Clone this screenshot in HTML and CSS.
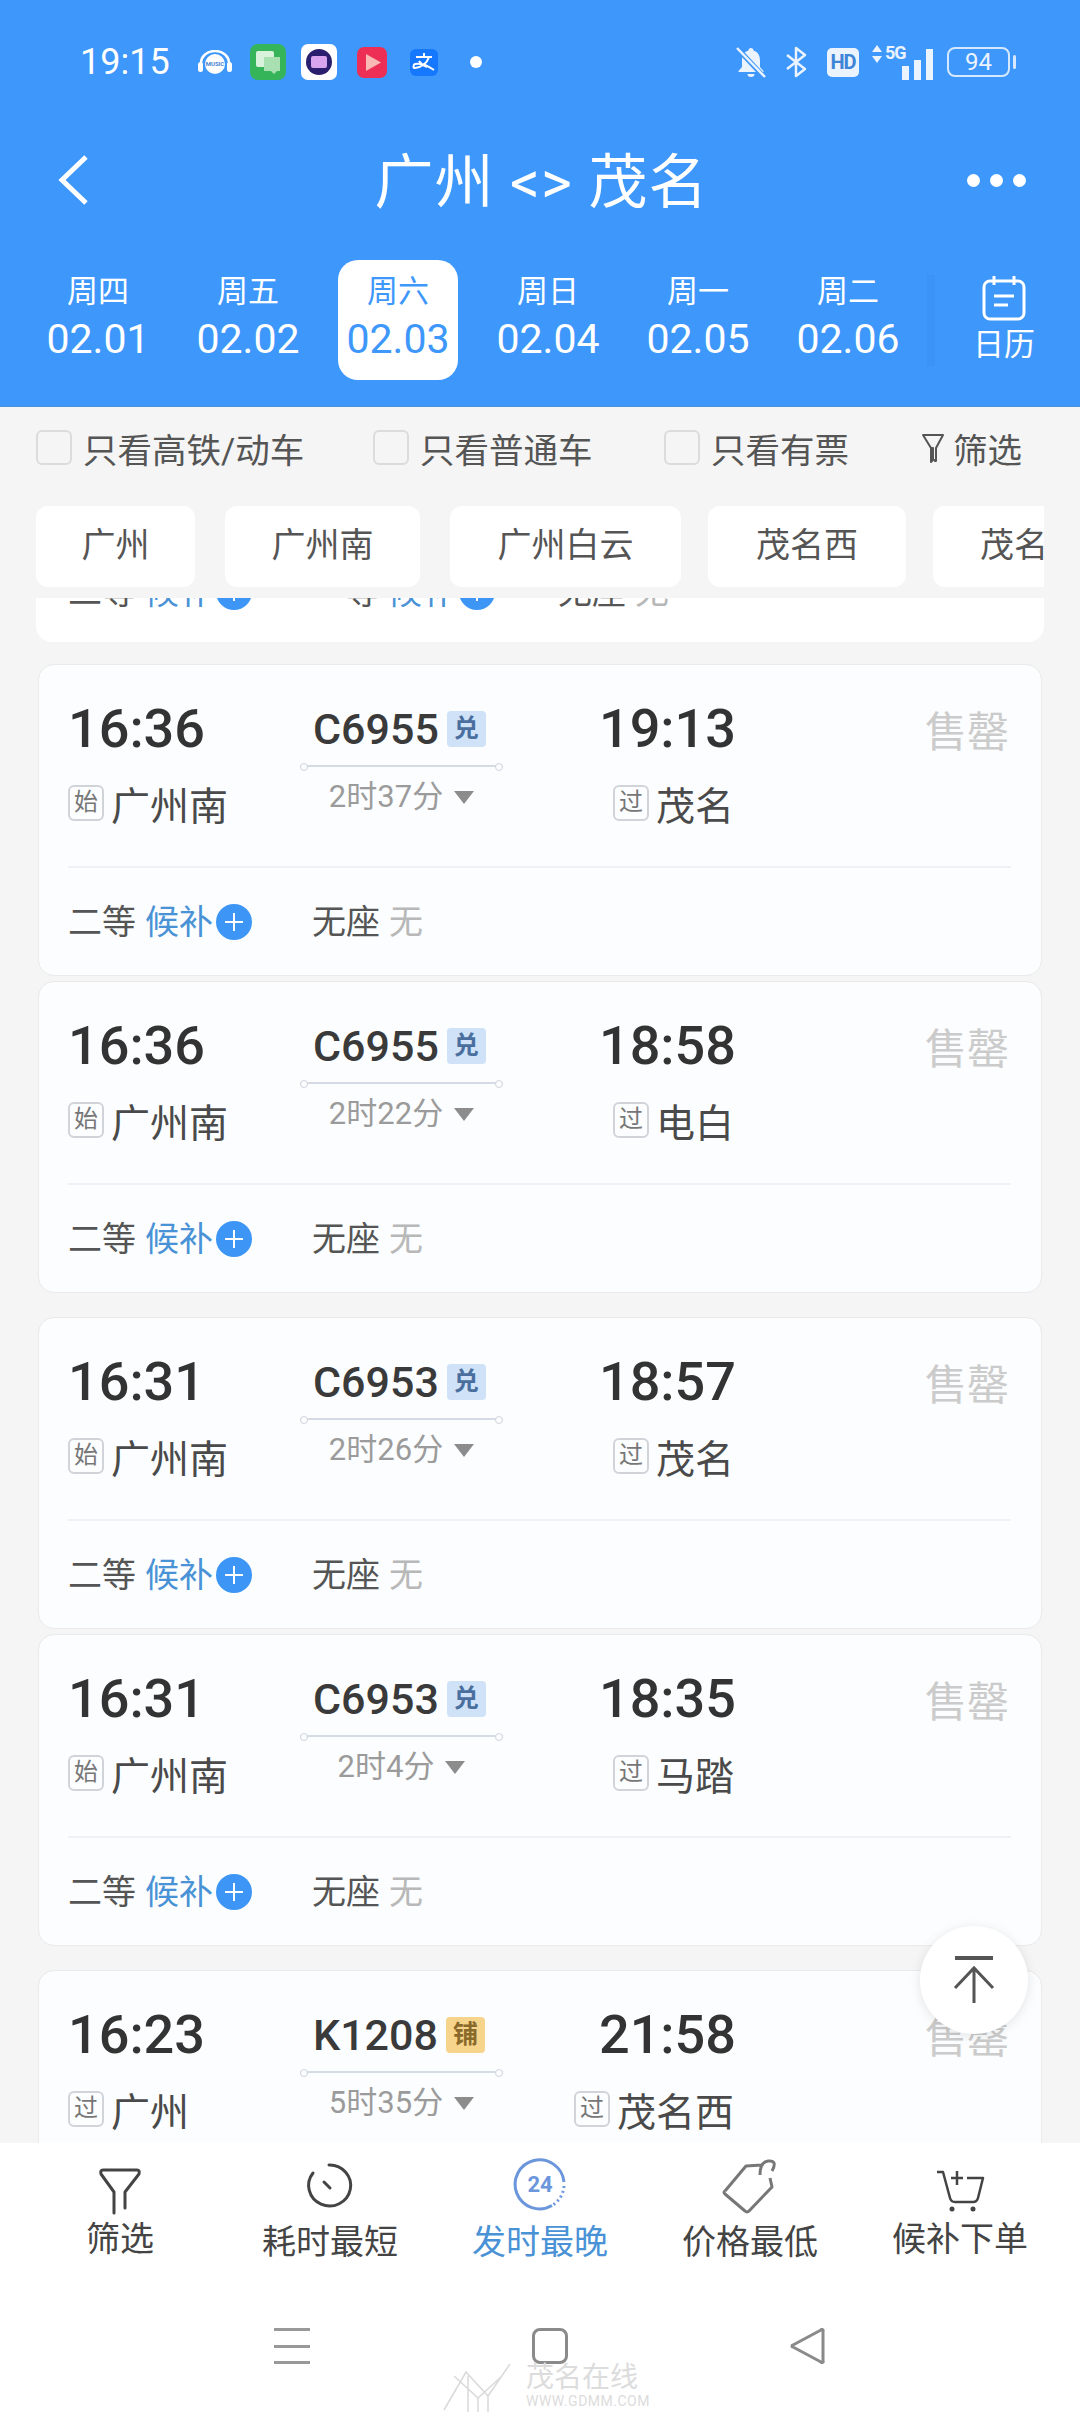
FILE: index.html
```html
<!DOCTYPE html>
<html lang="zh-CN">

<head>
    <meta charset="UTF-8">
    <title>广州 &lt;&gt; 茂名</title>
    <link rel="stylesheet" href="styles.css">
</head>

<body>
    <div class="page">
        <!-- top blue area -->
        <div class="header">
            <div class="status-bar">
                <span class="clock">19:15</span>
                <div class="notify-icons">
                    <svg class="ic-music" viewBox="0 0 34 24"><path d="M3 17V13a14 12 0 0 1 28 0v4" fill="none" stroke="#fff" stroke-width="2.5"/><circle cx="17" cy="14" r="10" fill="#fff"/><rect x="0" y="12" width="5" height="10" rx="2.5" fill="#fff"/><rect x="29" y="12" width="5" height="10" rx="2.5" fill="#fff"/><text x="17" y="16" text-anchor="middle" class="ic-music-text">MUSIC</text></svg>
                    <svg class="ic-app" viewBox="0 0 36 36"><rect width="36" height="36" rx="8" fill="#36b45a"/><rect x="6" y="7" width="18" height="16" rx="2" fill="#d9f2dc"/><path d="M14 13h16v14h-3l-3 3-3-3h-7z" fill="#a8e0b2"/></svg>
                    <svg class="ic-app" viewBox="0 0 36 36"><rect width="36" height="36" rx="7" fill="#fff"/><circle cx="18" cy="18" r="13" fill="#2a1f6e"/><rect x="10" y="12" width="16" height="12" rx="2" fill="#d8a4ee"/></svg>
                    <svg class="ic-red" viewBox="0 0 30 31"><rect width="30" height="31" rx="7" fill="#ee2f55"/><path d="M9 7l15 8.500-15 8.500z" fill="#f9b9b4"/></svg>
                    <svg class="ic-ali" viewBox="0 0 28 27"><rect width="28" height="27" rx="6" fill="#1677ff"/><path d="M6 8h16M14 4v4M19 8c-2 6-7 10-14 11-2 0-2-3 0-4 5-1 12 1 19 6M9 12c2 3 5 5 8 6" fill="none" stroke="#fff" stroke-width="2"/></svg>
                    <span class="status-dot"></span>
                </div>
                <div class="sys-icons">
                    <svg class="ic-bell" viewBox="0 0 32 34"><path d="M16 3c-1.500 0-2.500 1-2.500 2.500C8.500 7 7 11 7 16v6l-3.500 4v1h25v-1L25 22v-6c0-5-1.500-9-6.500-10.500C18.500 4 17.500 3 16 3zM12.500 29a3.500 3 0 0 0 7 0z" fill="#eaf3fe"/><path d="M3 4l26 28" stroke="#3e97fb" stroke-width="5"/><path d="M2 3l28 29" stroke="#eaf3fe" stroke-width="2.500"/></svg>
                    <svg class="ic-bt" viewBox="0 0 22 32"><path d="M2 9l18 14-9 7V2l9 7L2 23" fill="none" stroke="#eaf3fe" stroke-width="2.500" stroke-linejoin="round"/></svg>
                    <span class="hd">HD</span>
                    <div class="signal">
                        <svg class="ic-updown" viewBox="0 0 12 20"><path d="M6 1l5 7H1zM6 19l5-7H1z" fill="#eaf3fe"/></svg>
                        <span class="five-g">5G</span>
                        <div class="bars"><i class="bar-1"></i><i class="bar-2"></i><i class="bar-3"></i></div>
                    </div>
                    <div class="battery"><span>94</span></div>
                </div>
            </div>

            <div class="title-bar">
                <svg class="ic-back" viewBox="0 0 32 50"><path d="M29 2L5 25l24 23" fill="none" stroke="#fff" stroke-width="5"/></svg>
                <div class="title">广州 &lt;&gt; 茂名</div>
                <div class="more"><i></i><i></i><i></i></div>
            </div>

            <div class="date-bar">
                <div class="date-item"><span class="week">周四</span><span class="day">02.01</span></div>
                <div class="date-item"><span class="week">周五</span><span class="day">02.02</span></div>
                <div class="date-item date-item-current"><span class="week">周六</span><span class="day">02.03</span></div>
                <div class="date-item"><span class="week">周日</span><span class="day">02.04</span></div>
                <div class="date-item"><span class="week">周一</span><span class="day">02.05</span></div>
                <div class="date-item"><span class="week">周二</span><span class="day">02.06</span></div>
                <div class="calendar">
                    <svg class="ic-cal" viewBox="0 0 44 46"><rect x="2" y="6" width="40" height="38" rx="6" fill="none" stroke="#fff" stroke-width="3"/><path d="M12 1v9M32 1v9M12 21h20M12 30h14" fill="none" stroke="#fff" stroke-width="3"/></svg>
                    <span>日历</span>
                </div>
            </div>
        </div>

        <!-- filters -->
        <div class="filter-bar">
            <label class="check check-1"><i></i>只看高铁/动车</label>
            <label class="check check-2"><i></i>只看普通车</label>
            <label class="check check-3"><i></i>只看有票</label>
            <div class="filter-link">
                <svg class="ic-filter-sm" viewBox="0 0 24 32"><path d="M2 3h20l-7 13v13h-1l-2-2V16h-1v13l-1 1V16z" fill="none" stroke="#555" stroke-width="2" stroke-linejoin="round"/></svg>
                筛选
            </div>
        </div>

        <div class="tab-bar">
            <div class="tab tab-1">广州</div>
            <div class="tab tab-2">广州南</div>
            <div class="tab tab-3">广州白云</div>
            <div class="tab tab-4">茂名西</div>
            <div class="tab tab-5">茂名</div>
        </div>

        <!-- train list -->
        <div class="list">
            <div class="card-tail">
                <div class="seats seats-tail">
                    <span class="seat">二等 <b>候补</b><i class="plus"></i></span>
                    <span class="seat seat-mid">一等 <b>候补</b><i class="plus"></i></span>
                    <span class="seat seat-last">无座 <em>无</em></span>
                </div>
            </div>

            <div class="card">
                <div class="train">
                    <div class="time">16:36</div>
                    <div class="code"><span>C6955</span><i class="tag">兑</i></div>
                    <div class="time time-end">19:13</div>
                    <div class="sold">售罄</div>
                    <div class="station"><i class="mark">始</i>广州南</div>
                    <div class="span"><div class="span-line"></div><div class="during">2时37分<i class="tri"></i></div></div>
                    <div class="station station-end"><i class="mark">过</i>茂名</div>
                </div>
                <div class="seats">
                    <span class="seat">二等 <b>候补</b><i class="plus"></i></span>
                    <span class="seat seat-2">无座 <em>无</em></span>
                </div>
            </div>

            <div class="card card-gap">
                <div class="train">
                    <div class="time">16:36</div>
                    <div class="code"><span>C6955</span><i class="tag">兑</i></div>
                    <div class="time time-end">18:58</div>
                    <div class="sold">售罄</div>
                    <div class="station"><i class="mark">始</i>广州南</div>
                    <div class="span"><div class="span-line"></div><div class="during">2时22分<i class="tri"></i></div></div>
                    <div class="station station-end"><i class="mark">过</i>电白</div>
                </div>
                <div class="seats">
                    <span class="seat">二等 <b>候补</b><i class="plus"></i></span>
                    <span class="seat seat-2">无座 <em>无</em></span>
                </div>
            </div>

            <div class="card">
                <div class="train">
                    <div class="time">16:31</div>
                    <div class="code"><span>C6953</span><i class="tag">兑</i></div>
                    <div class="time time-end">18:57</div>
                    <div class="sold">售罄</div>
                    <div class="station"><i class="mark">始</i>广州南</div>
                    <div class="span"><div class="span-line"></div><div class="during">2时26分<i class="tri"></i></div></div>
                    <div class="station station-end"><i class="mark">过</i>茂名</div>
                </div>
                <div class="seats">
                    <span class="seat">二等 <b>候补</b><i class="plus"></i></span>
                    <span class="seat seat-2">无座 <em>无</em></span>
                </div>
            </div>

            <div class="card card-gap">
                <div class="train">
                    <div class="time">16:31</div>
                    <div class="code"><span>C6953</span><i class="tag">兑</i></div>
                    <div class="time time-end">18:35</div>
                    <div class="sold">售罄</div>
                    <div class="station"><i class="mark">始</i>广州南</div>
                    <div class="span"><div class="span-line"></div><div class="during">2时4分<i class="tri"></i></div></div>
                    <div class="station station-end"><i class="mark">过</i>马踏</div>
                </div>
                <div class="seats">
                    <span class="seat">二等 <b>候补</b><i class="plus"></i></span>
                    <span class="seat seat-2">无座 <em>无</em></span>
                </div>
            </div>

            <div class="card">
                <div class="train">
                    <div class="time">16:23</div>
                    <div class="code"><span>K1208</span><i class="tag tag-bed">铺</i></div>
                    <div class="time time-end">21:58</div>
                    <div class="sold">售罄</div>
                    <div class="station"><i class="mark">过</i>广州</div>
                    <div class="span"><div class="span-line"></div><div class="during">5时35分<i class="tri"></i></div></div>
                    <div class="station station-end"><i class="mark">过</i>茂名西</div>
                </div>
            </div>
        </div>

        <!-- bottom sort bar -->
        <div class="sort-bar">
            <div class="sort-item sort-item-edge">
                <svg class="ic-sort" viewBox="0 0 52 52"><path d="M20 55V34L7 16q-1-4 2-4H43q3 0 2 4L31 34V50" fill="none" stroke="#444" stroke-width="3" stroke-linejoin="round" stroke-linecap="round"/></svg>
                <span>筛选</span>
            </div>
            <div class="sort-item">
                <svg class="ic-sort" viewBox="0 0 52 52"><path d="M25 7A21 20.500 0 1 1 9 15" fill="none" stroke="#444" stroke-width="3" stroke-linecap="round"/><path d="M20 24l6 6" stroke="#444" stroke-width="3" stroke-linecap="round"/></svg>
                <span>耗时最短</span>
            </div>
            <div class="sort-item sort-item-current">
                <svg class="ic-sort" viewBox="0 0 52 52"><path d="M38 47.500A24.500 24.500 0 1 1 50 24" fill="none" stroke="#6b96dc" stroke-width="3"/><path d="M50 28a24.500 24.500 0 0 1-12 19.500" fill="none" stroke="#6b96dc" stroke-width="3" stroke-dasharray="2 3"/><text x="26" y="34" text-anchor="middle" class="ic-24">24</text></svg>
                <span>发时最晚</span>
            </div>
            <div class="sort-item">
                <svg class="ic-sort" viewBox="0 0 52 52"><path d="M1 33L22 8 38 7M46 20l2 9-23 24q-2 2-4 0L1 36q-2-2 0-3M36 17q0-13 8-14 10-1 4 10" fill="none" stroke="#777" stroke-width="3" stroke-linejoin="round"/></svg>
                <span>价格最低</span>
            </div>
            <div class="sort-item sort-item-edge">
                <svg class="ic-sort" viewBox="0 0 52 52"><path d="M3 14h6l7 26q1 4 5 4h18q4 0 5-4l5-20H33" fill="none" stroke="#444" stroke-width="2.500" stroke-linejoin="round"/><path d="M23 13v14M17 20h12" stroke="#444" stroke-width="2.500"/><circle cx="18" cy="51" r="2.500" fill="#444"/><circle cx="39" cy="51" r="2.500" fill="#444"/></svg>
                <span>候补下单</span>
            </div>
        </div>

        <div class="nav-bar">
            <div class="nav-menu"><i></i><i></i><i></i></div>
            <div class="nav-home"></div>
            <svg class="nav-back" viewBox="0 0 36 36"><path d="M33 3v30a1 1 0 0 1-2 1L3 19a1 1 0 0 1 0-2L31 2a1 1 0 0 1 2 1z" fill="none" stroke="#8a8a8a" stroke-width="3" stroke-linejoin="round"/></svg>
        </div>

        <!-- things lying over the page -->
        <div class="to-top">
            <svg class="ic-top" viewBox="0 0 44 50"><path d="M3 3h38" stroke="#555" stroke-width="4"/><path d="M22 48V15M3 33l19-20 19 20" fill="none" stroke="#555" stroke-width="3"/></svg>
        </div>
        <div class="watermark">
            <svg class="wm-logo" viewBox="0 0 70 50"><path d="M2 48L24 10l22 24L68 2M12 14l24 22 24-22M36 36v14M46 34v16M26 14v36" fill="none" stroke="#d9d9d9" stroke-width="1.500"/></svg>
            <div class="wm-text"><span class="wm-name">茂名在线</span><span class="wm-url">WWW.GDMM.COM</span></div>
        </div>
    </div>
</body>

</html>
```

FILE: styles.css
```css
* {
    box-sizing: border-box;
}

html,
body {
    margin: 0;
    padding: 0;
}

.page {
    width: 1080px;
    height: 2412px;
    position: relative;
    overflow: hidden;
    display: flex;
    flex-direction: column;
    background: #f5f5f5;
    font-family: Roboto, "Noto Sans CJK SC", sans-serif;
    color: #444;
}

i,
em {
    font-style: normal;
}

/* header */
.header {
    height: 407px;
    flex: none;
    background: #3e97fb;
    color: #fff;
    border-bottom: 1px solid #4a93dc;
}

.status-bar {
    height: 100px;
    padding: 24px 70px 0 80px;
    display: flex;
    align-items: center;
}

.clock {
    width: 92px;
    font-size: 36px;
}

.notify-icons {
    display: flex;
    align-items: center;
    margin-left: 26px;
    flex: 1;
}

.ic-music {
    width: 34px;
    height: 24px;
    margin-right: 18px;
}

.ic-music-text {
    font-family: Roboto, sans-serif;
    font-size: 6px;
    font-weight: 700;
    fill: #4a83d0;
}

.ic-app {
    width: 36px;
    height: 36px;
    margin-right: 15px;
}

.ic-red {
    width: 30px;
    height: 31px;
    margin: 0 23px 0 5px;
}

.ic-ali {
    width: 28px;
    height: 27px;
}

.status-dot {
    width: 12px;
    height: 12px;
    border-radius: 50%;
    background: #fff;
    margin-left: 32px;
}

.sys-icons {
    display: flex;
    align-items: center;
}

.ic-bell {
    width: 34px;
    height: 34px;
    margin-right: 17px;
}

.ic-bt {
    width: 22px;
    height: 32px;
    margin-right: 20px;
}

.hd {
    width: 32px;
    height: 29px;
    border-radius: 5px;
    background: #eaf3fe;
    color: #3e85d8;
    font-size: 20px;
    font-weight: 700;
    line-height: 29px;
    text-align: center;
    letter-spacing: -1px;
    margin-right: 12px;
}

.signal {
    width: 62px;
    height: 36px;
    position: relative;
    margin-right: 14px;
}

.ic-updown {
    width: 12px;
    height: 20px;
    position: absolute;
    left: 0;
    top: 0;
}

.five-g {
    position: absolute;
    left: 14px;
    top: -3px;
    font-size: 18px;
    line-height: 24px;
    font-weight: 700;
    letter-spacing: -1px;
    color: #eaf3fe;
}

.bars {
    position: absolute;
    right: 0;
    bottom: 0;
    display: flex;
    align-items: flex-end;
    gap: 5px;
}

.bars i {
    width: 7px;
    background: #eaf3fe;
}

.bar-1 {
    height: 14px;
}

.bar-2 {
    height: 20px;
}

.bar-3 {
    height: 31px;
}

.battery {
    width: 63px;
    height: 30px;
    border: 2px solid #d6e8fd;
    border-radius: 8px;
    position: relative;
    text-align: center;
    color: #eaf3fe;
    font-size: 24px;
    line-height: 26px;
}

.battery::after {
    content: "";
    position: absolute;
    right: -8px;
    top: 6px;
    width: 3px;
    height: 14px;
    background: #d6e8fd;
    border-radius: 2px;
}

.title-bar {
    height: 160px;
    padding: 0 54px 0 57px;
    display: flex;
    align-items: center;
    justify-content: space-between;
}

.ic-back {
    width: 32px;
    height: 50px;
}

.title {
    font-size: 59px;
    letter-spacing: 1px;
    margin-left: 27px;
    padding-bottom: 6px;
}

.more {
    display: flex;
    gap: 10px;
}

.more i {
    width: 13px;
    height: 13px;
    border-radius: 50%;
    background: #fff;
}

.date-bar {
    padding-left: 23px;
    display: flex;
    align-items: flex-start;
}

.date-item {
    width: 150px;
    height: 120px;
    display: flex;
    flex-direction: column;
    align-items: center;
    padding-top: 9px;
}

.date-item-current {
    width: 120px;
    margin: 0 15px;
    background: #fff;
    border-radius: 20px;
    color: #3e97fb;
}

.week {
    font-size: 31px;
    line-height: 46px;
}

.day {
    font-size: 41px;
    line-height: 48px;
}

.calendar {
    margin: 15px 0 0 4px;
    padding-left: 38px;
    height: 91px;
    display: flex;
    flex-direction: column;
    align-items: center;
    font-size: 31px;
    line-height: 42px;
    border-left: 8px solid #3b93f6;
}

.ic-cal {
    width: 44px;
    height: 46px;
    margin-bottom: 3px;
    flex: none;
}

/* filters */
.filter-bar {
    height: 99px;
    flex: none;
    display: flex;
    align-items: center;
    font-size: 34.5px;
    padding: 0 0 18px 36px;
    color: #555;
}

.check {
    display: flex;
    align-items: center;
    gap: 11px;
}

.check i {
    width: 36px;
    height: 35px;
    border: 2px solid #dcdcdc;
    border-radius: 6px;
}

.check-1 {
    width: 337px;
}

.check-2 {
    width: 291px;
}

.check-3 {
    width: 257px;
}

.filter-link {
    display: flex;
    align-items: center;
    gap: 8px;
}

.ic-filter-sm {
    width: 24px;
    height: 32px;
}

/* station tabs */
.tab-bar {
    height: 81px;
    flex: none;
    margin: 0 36px 11px;
    display: flex;
    overflow: hidden;
    font-size: 34px;
    color: #555;
}

.tab {
    flex: none;
    height: 81px;
    line-height: 78px;
    background: #fff;
    border-radius: 12px;
    text-align: center;
}

.tab-1 {
    width: 159px;
    margin-right: 30px;
}

.tab-2 {
    width: 195px;
    margin-right: 30px;
}

.tab-3 {
    width: 231px;
    margin-right: 27px;
}

.tab-4 {
    width: 198px;
    margin-right: 27px;
}

.tab-5 {
    width: 160px;
    text-align: left;
    padding-left: 47px;
}

/* train list */
.list {
    flex: 1;
    min-height: 0;
    overflow: hidden;
    margin: 0 36px;
}

.card-tail {
    height: 104px;
    margin-top: -60px;
    margin-bottom: 22px;
    padding-left: 32px;
    background: #fff;
    border-radius: 16px;
}

.seats-tail {
    padding-top: 0;
    border: none;
    color: #555;
}

.seat-mid {
    margin-left: 59px;
}

.seat-last {
    margin-left: 63px;
}

.card {
    margin: 0 2px 5px;
    height: 312px;
    background: #fbfdfe;
    border: 1px solid #eaeaea;
    border-radius: 16px;
    padding: 26px 30px 0 29px;
}

.card-gap {
    margin-bottom: 24px;
}

.train {
    height: 177px;
    display: grid;
    grid-template-columns: 221px 221px 226px 273px;
    grid-template-rows: 76px 100px;
    border-bottom: 2px solid #eff1f4;
}

.time {
    font-size: 54px;
    font-weight: 500;
    line-height: 76px;
    color: #333;
}

.time-end {
    text-align: right;
}

.code {
    display: flex;
    align-items: center;
    gap: 8px;
    padding-left: 24px;
    font-size: 43px;
    font-weight: 500;
    color: #3a3a3a;
}

.tag {
    flex: none;
    width: 39px;
    height: 36px;
    border-radius: 4px;
    background: #cfe2f8;
    color: #4a6f9e;
    font-size: 25px;
    font-weight: 700;
    line-height: 36px;
    text-align: center;
}

.tag-bed {
    background: #f7d48b;
    color: #8a6a2a;
}

.sold {
    padding-top: 8px;
    font-size: 42px;
    line-height: 68px;
    color: #cbcbcb;
    text-align: right;
}

.station {
    display: flex;
    align-items: center;
    height: 60px;
    margin-top: 6px;
    font-size: 39px;
    color: #4a4a4a;
}

.station-end {
    justify-content: flex-end;
    padding-right: 2px;
}

.mark {
    width: 36px;
    height: 36px;
    margin-right: 7px;
    border: 2px solid #d0d4d8;
    border-radius: 6px;
    font-size: 24px;
    line-height: 31px;
    text-align: center;
    color: #777;
}

.span {
    padding: 0;
    margin-top: -2px;
}

.span-line {
    width: 203px;
    height: 2px;
    margin: 0 0 0 11px;
    background: #d5dbe4;
    position: relative;
}

.span-line::before,
.span-line::after {
    content: "";
    position: absolute;
    top: -2px;
    width: 6px;
    height: 6px;
    border: 1px solid #cfd5dd;
    border-radius: 50%;
    background: #fbfdfe;
}

.span-line::before {
    left: 0;
}

.span-line::after {
    right: 0;
}

.during {
    margin-top: 8px;
    display: flex;
    align-items: center;
    justify-content: center;
    padding-left: 4px;
    font-size: 31px;
    line-height: 44px;
    color: #9b9b9b;
}

.tri {
    width: 0;
    height: 0;
    margin-left: 11px;
    border-left: 10px solid transparent;
    border-right: 10px solid transparent;
    border-top: 13px solid #8c8c8c;
}

.seats {
    padding-top: 31px;
    display: flex;
    font-size: 34px;
    line-height: 46px;
    color: #555;
}

.seat {
    display: flex;
    align-items: center;
    gap: 9px;
}

.seat b {
    font-weight: 400;
    color: #4a92d6;
}

.seat em {
    color: #b8b8b8;
}

.plus {
    width: 36px;
    height: 36px;
    margin-left: -6px;
    border-radius: 50%;
    background: #3d96f5;
    position: relative;
}

.plus::before,
.plus::after {
    content: "";
    position: absolute;
    background: #fff;
    left: 9px;
    top: 17px;
    width: 18px;
    height: 2px;
}

.plus::after {
    left: 17px;
    top: 9px;
    width: 2px;
    height: 18px;
}

.seat-2 {
    margin-left: 60px;
}

/* bottom bar */
.sort-bar {
    height: 177px;
    flex: none;
    background: #fff;
    padding: 15px 15px 0;
    display: flex;
    position: relative;
}

.sort-item {
    width: 210px;
    display: flex;
    flex-direction: column;
    align-items: center;
    font-size: 34px;
    line-height: 46px;
    color: #444;
}

.sort-item-edge {
    line-height: 40px;
}

.sort-item-current {
    color: #4a92d6;
}

.ic-sort {
    width: 52px;
    height: 52px;
    margin-bottom: 9px;
    overflow: visible;
}

.ic-24 {
    font-family: Roboto, sans-serif;
    font-size: 22px;
    font-weight: 700;
    fill: #6b96dc;
}

.nav-bar {
    height: 92px;
    flex: none;
    background: #fff;
    display: flex;
    align-items: flex-start;
    padding: 8px 0 0 274px;
}

.nav-menu {
    width: 36px;
    height: 36px;
    display: flex;
    flex-direction: column;
    justify-content: space-between;
}

.nav-menu i {
    height: 3px;
    background: #999;
}

.nav-home {
    width: 36px;
    height: 36px;
    margin-left: 222px;
    border: 3px solid #8a8a8a;
    border-radius: 8px;
}

.nav-back {
    width: 36px;
    height: 36px;
    margin-left: 222px;
}

.to-top {
    position: absolute;
    left: 920px;
    top: 1926px;
    width: 108px;
    height: 108px;
    border-radius: 50%;
    background: #fff;
    box-shadow: 0 2px 12px rgba(0, 0, 0, 0.1);
    display: flex;
    align-items: center;
    justify-content: center;
}

.ic-top {
    width: 44px;
    height: 50px;
}

.watermark {
    position: absolute;
    left: 442px;
    top: 2362px;
    display: flex;
    gap: 14px;
    color: #dcdcdc;
}

.wm-logo {
    width: 70px;
    height: 50px;
}

.wm-text {
    display: flex;
    flex-direction: column;
}

.wm-name {
    font-size: 28px;
    line-height: 31px;
    white-space: nowrap;
}

.wm-url {
    font-size: 14px;
    line-height: 16px;
    white-space: nowrap;
    letter-spacing: 0.5px;
}
```
